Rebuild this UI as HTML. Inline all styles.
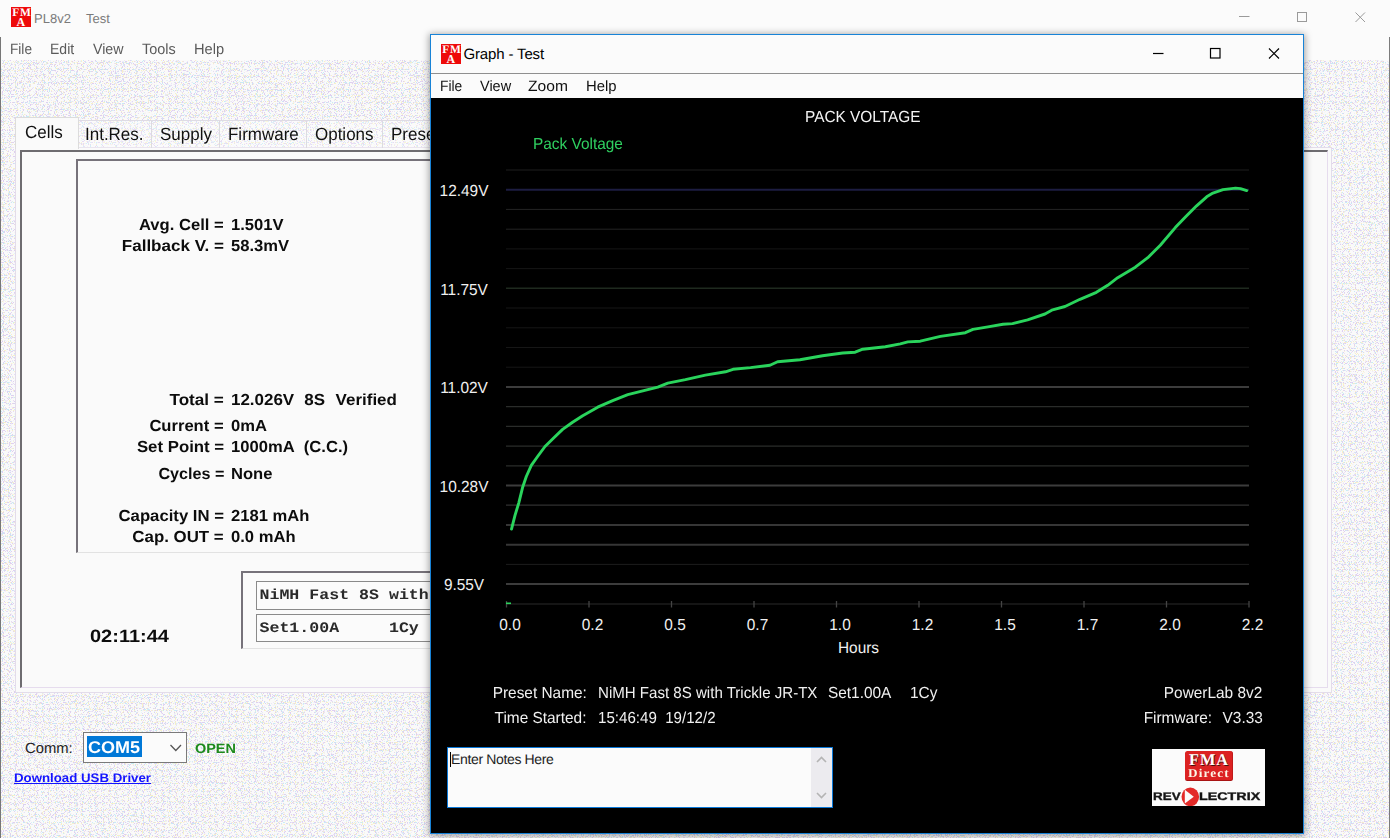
<!DOCTYPE html>
<html><head><meta charset="utf-8"><title>PL8v2 Test</title>
<style>
html,body{margin:0;padding:0}
body{text-rendering:geometricPrecision;width:1390px;height:838px;position:relative;overflow:hidden;background:#f2f1f5;font-family:"Liberation Sans",sans-serif;color:#000}
.a{position:absolute;white-space:nowrap;line-height:1}
.ui{font-size:15px}
.ico{position:absolute;width:20px;height:20px;background:#ee0a0a;overflow:hidden;color:#fff;font-family:"Liberation Serif",serif;font-weight:bold}
.ico b{position:absolute;line-height:1;white-space:nowrap}
.b{font-weight:bold}
.lab{position:absolute;white-space:nowrap;line-height:1;font-weight:bold;font-size:16px;color:#0c0c0c}
.lab.l{transform:scaleX(1.0366);transform-origin:right bottom}
.lab.v{transform:scaleX(1.0366);transform-origin:left bottom}
.gt{position:absolute;white-space:nowrap;line-height:1;font-size:16px;color:#f0f0f0;transform:scaleX(0.9625);transform-origin:left}
.gt.r{transform-origin:right}
.mono{font-family:"Liberation Mono",monospace;font-size:16.6px;font-weight:bold;color:#2a2a2a;transform:scaleY(0.88);transform-origin:left bottom}
</style></head><body>

<!-- ================= MAIN WINDOW ================= -->
<svg class="a" id="noise" style="left:0;top:0" width="1390" height="838">
<defs>
<filter id="nz" x="0" y="0" width="100%" height="100%" color-interpolation-filters="sRGB">
<feTurbulence type="fractalNoise" baseFrequency="0.85" numOctaves="1" seed="7" result="t"/>
<feColorMatrix in="t" type="matrix" values="0 0 0 0 0.87  0 0 0 0 0.81  0 0 0 0 0.94  14 0 0 0 -7.75" result="lav"/>
<feColorMatrix in="t" type="matrix" values="0 0 0 0 0.97  0 0 0 0 0.94  0 0 0 0 0.78  0 14 0 0 -8.55" result="yel"/>
<feColorMatrix in="t" type="matrix" values="0 0 0 0 0.78  0 0 0 0 0.92  0 0 0 0 0.96  0 0 14 0 -8.75" result="cy"/>
<feFlood flood-color="#fafafa" result="base"/>
<feMerge><feMergeNode in="base"/><feMergeNode in="lav"/><feMergeNode in="yel"/><feMergeNode in="cy"/></feMerge>
</filter>
</defs>
<rect x="0" y="0" width="1390" height="838" filter="url(#nz)"/>
</svg>
<div class="a" id="mtitle" style="left:0;top:0;width:1390px;height:37px;background:#fbfbfb"></div>
<div class="a" id="mmenu" style="left:0;top:37px;width:1390px;height:23px;background:#fbfbfb"></div>
<div class="a" style="left:0;top:37px;width:1px;height:801px;background:#777"></div>
<div class="a" style="left:1389px;top:37px;width:1px;height:801px;background:#7c7c7c"></div>
<div class="ico" style="left:11px;top:7px"><b style="left:1.3px;top:0.5px;font-size:11.5px;letter-spacing:0.8px">FM</b><b style="left:5.6px;top:9.3px;font-size:12px">A</b></div>
<div class="a" style="left:34px;top:12px;font-size:13px;color:#7a7a7a">PL8v2</div>
<div class="a" style="left:86px;top:12px;font-size:13px;color:#7a7a7a">Test</div>
<div class="a ui" style="left:10px;top:41.7px;color:#5a5a5a;transform:scaleX(0.91);transform-origin:left">File</div>
<div class="a ui" style="left:50.2px;top:41.7px;color:#5a5a5a;transform:scaleX(0.934);transform-origin:left">Edit</div>
<div class="a ui" style="left:92.6px;top:41.7px;color:#5a5a5a;transform:scaleX(0.947);transform-origin:left">View</div>
<div class="a ui" style="left:141.9px;top:41.7px;color:#5a5a5a;transform:scaleX(0.963);transform-origin:left">Tools</div>
<div class="a ui" style="left:193.8px;top:41.7px;color:#5a5a5a;transform:scaleX(0.977);transform-origin:left">Help</div>
<svg class="a" style="left:1230px;top:5px" width="150" height="26" viewBox="0 0 150 26" fill="none" stroke="#9a9a9a" stroke-width="1">
<path d="M9 11.5H19.5"/><rect x="67.5" y="7.5" width="9" height="9"/><path d="M125.5 7.5L135 17M135 7.5L125.5 17"/></svg>

<!-- tab control -->
<div class="a" id="tabpage" style="left:15px;top:147px;width:1317px;height:546px;background:#fafafa;border:1px solid #e3dcea;box-sizing:border-box"></div>
<div class="a" style="left:20px;top:150px;width:1308px;height:538px;border-left:2px solid #6e6c70;border-top:2px solid #6e6c70;border-right:1px solid #e6dcee;border-bottom:1px solid #e6dcee;box-sizing:border-box"></div>
<div class="a" style="left:79px;top:120px;width:360px;height:28px;background:rgba(255,255,255,0.25);border-top:1px solid #dedbe4"></div>
<div class="a" style="left:151px;top:121px;width:1px;height:27px;background:#dcdbe0"></div>
<div class="a" style="left:219px;top:121px;width:1px;height:27px;background:#dcdbe0"></div>
<div class="a" style="left:306px;top:121px;width:1px;height:27px;background:#dcdbe0"></div>
<div class="a" style="left:382px;top:121px;width:1px;height:27px;background:#dcdbe0"></div>
<div class="a" style="left:15px;top:117px;width:64px;height:32px;background:#fafafa;border:1px solid #dcdcdc;border-bottom:none;box-sizing:border-box"></div>
<div class="a" style="left:24.5px;top:124.2px;font-size:17.7px;color:#111;transform:scaleX(0.96);transform-origin:left">Cells</div>
<div class="a" style="left:84.5px;top:126.3px;font-size:17.7px;color:#111;transform:scaleX(0.96);transform-origin:left">Int.Res.</div>
<div class="a" style="left:159.5px;top:126.3px;font-size:17.7px;color:#111;transform:scaleX(0.96);transform-origin:left">Supply</div>
<div class="a" style="left:228px;top:126.3px;font-size:17.7px;color:#111;transform:scaleX(0.96);transform-origin:left">Firmware</div>
<div class="a" style="left:314.5px;top:126.3px;font-size:17.7px;color:#111;transform:scaleX(0.96);transform-origin:left">Options</div>
<div class="a" style="left:391px;top:126.3px;font-size:17.7px;color:#111;transform:scaleX(0.96);transform-origin:left">Presets</div>

<!-- inner panel -->
<div class="a" style="left:76px;top:159px;width:1200px;height:394px;border-left:2px solid #76727a;border-top:2px solid #76727a;border-bottom:1px solid #e2e2e2;box-sizing:border-box"></div>

<div class="lab l" style="right:1166px;top:217.8px">Avg. Cell =</div><div class="lab v" style="left:231px;top:217.8px">1.501V</div>
<div class="lab l" style="right:1166px;top:238.8px;transform:scaleX(1.065)">Fallback V. =</div><div class="lab v" style="left:231px;top:238.8px">58.3mV</div>
<div class="lab l" style="right:1166px;top:392.8px;transform:scaleX(1.069)">Total =</div><div class="lab v" style="left:231px;top:392.8px;transform:scaleX(1.060)">12.026V<span style="margin-left:9.5px">8S</span><span style="margin-left:10px">Verified</span></div>
<div class="lab l" style="right:1166px;top:418.8px">Current =</div><div class="lab v" style="left:231px;top:418.8px">0mA</div>
<div class="lab l" style="right:1166px;top:439.8px;transform:scaleX(1.049)">Set Point =</div><div class="lab v" style="left:231px;top:439.8px">1000mA&nbsp; (C.C.)</div>
<div class="lab l" style="right:1166px;top:466.8px;transform:scaleX(1.009)">Cycles =</div><div class="lab v" style="left:231px;top:466.8px">None</div>
<div class="lab l" style="right:1166px;top:508.8px;transform:scaleX(1.044)">Capacity IN =</div><div class="lab v" style="left:231px;top:508.8px">2181 mAh</div>
<div class="lab l" style="right:1166px;top:529.8px;transform:scaleX(1.054)">Cap. OUT =</div><div class="lab v" style="left:231px;top:529.8px">0.0 mAh</div>

<!-- preset box -->
<div class="a" style="left:241px;top:571px;width:260px;height:78px;border-left:2px solid #76727a;border-top:2px solid #76727a;border-bottom:1px solid #e2e2e2;box-sizing:border-box"></div>
<div class="a" style="left:256px;top:581px;width:240px;height:29px;border:1px solid #8a8a8a;box-sizing:border-box;background:#fbfbfb"></div>
<div class="a" style="left:256px;top:614px;width:240px;height:28px;border:1px solid #8a8a8a;box-sizing:border-box;background:#fbfbfb"></div>
<div class="a mono" style="left:259.5px;top:586.4px">NiMH Fast 8S with Trickle</div>
<div class="a mono" style="left:259.5px;top:619px">Set1.00A&nbsp;&nbsp;&nbsp;&nbsp;&nbsp;1Cy</div>
<div class="lab v" style="left:90px;top:627.5px;font-size:17.9px;transform:scaleX(1.118)">02:11:44</div>

<!-- comm -->
<div class="a" style="left:25px;top:742.2px;font-size:14.8px;color:#222">Comm:</div>
<div class="a" style="left:83px;top:732px;width:104px;height:31px;border:1px solid #7a7a7a;box-sizing:border-box;background:#fbfbfb"></div>
<div class="a" style="left:87px;top:736px;width:55px;height:21px;background:#0078d7"></div>
<div class="a b" style="left:88px;top:739.3px;font-size:17px;color:#fff;transform:scaleX(1.06);transform-origin:left">COM5</div>
<svg class="a" style="left:168px;top:742px" width="16" height="12" viewBox="0 0 16 12" fill="none" stroke="#555" stroke-width="1.3"><path d="M2.5 3L7.8 8.5L13 3"/></svg>
<div class="a b" style="left:195px;top:742px;font-size:13.5px;color:#1d8a1d;transform:scaleX(1.07);transform-origin:left">OPEN</div>
<div class="a b" style="left:14px;top:771.7px;font-size:12.4px;color:#1414ff;text-decoration:underline;transform:scaleX(1.07);transform-origin:left">Download USB Driver</div>

<!-- ================= GRAPH WINDOW ================= -->
<div class="a" id="gwin" style="left:430px;top:34px;width:874px;height:800px;background:#000;border:1px solid #1883d7;box-sizing:border-box;box-shadow:0 1px 7px 1px rgba(0,0,0,0.36)"></div>
<div class="a" style="left:431px;top:35px;width:872px;height:38px;background:#fbfbfb"></div>
<div class="a" style="left:431px;top:73px;width:872px;height:1px;background:#8f8f8f"></div>
<div class="a" style="left:431px;top:74px;width:872px;height:24px;background:#fbfbfb"></div>
<div class="ico" style="left:441px;top:44px"><b style="left:1.3px;top:0.5px;font-size:11.5px;letter-spacing:0.8px">FM</b><b style="left:5.6px;top:9.3px;font-size:12px">A</b></div>
<div class="a" style="left:463.5px;top:47.3px;font-size:15px;color:#000;letter-spacing:-0.15px">Graph - Test</div>
<div class="a ui" style="left:440px;top:78.9px;color:#111;transform:scaleX(0.92);transform-origin:left">File</div>
<div class="a ui" style="left:479.5px;top:78.9px;color:#111;transform:scaleX(0.965);transform-origin:left">View</div>
<div class="a ui" style="left:528.3px;top:78.9px;color:#111;transform:scaleX(1.04);transform-origin:left">Zoom</div>
<div class="a ui" style="left:586px;top:78.9px;color:#111;transform:scaleX(0.99);transform-origin:left">Help</div>
<svg class="a" style="left:1145px;top:41px" width="150" height="26" viewBox="0 0 150 26" fill="none" stroke="#000" stroke-width="1.2">
<path d="M8 12.5H18.5"/><rect x="65.5" y="7.5" width="9.5" height="9.5"/><path d="M124 7.5L134 17.5M134 7.5L124 17.5"/></svg>

<!-- chart -->
<div class="gt" style="left:805px;top:110px;color:#f4f4f4">PACK VOLTAGE</div>
<div class="gt" style="left:533px;top:136.5px;color:#2fd060">Pack Voltage</div>
<svg class="a" id="chart" style="left:431px;top:98px" width="872" height="560" viewBox="431 98 872 560">
<g id="grid" font-family="Liberation Sans, sans-serif">
<line x1="506" x2="1249" y1="170.0" y2="170.0" stroke="#1e1e1e" stroke-width="1"/>
<line x1="506" x2="1249" y1="189.7" y2="189.7" stroke="#1d1d42" stroke-width="2"/>
<line x1="506" x2="1249" y1="209.4" y2="209.4" stroke="#242424" stroke-width="1"/>
<line x1="506" x2="1249" y1="229.2" y2="229.2" stroke="#242424" stroke-width="1"/>
<line x1="506" x2="1249" y1="248.9" y2="248.9" stroke="#161616" stroke-width="1"/>
<line x1="506" x2="1249" y1="268.6" y2="268.6" stroke="#161616" stroke-width="1"/>
<line x1="506" x2="1249" y1="288.3" y2="288.3" stroke="#1f2a1f" stroke-width="1.5"/>
<line x1="506" x2="1249" y1="308.0" y2="308.0" stroke="#161616" stroke-width="1"/>
<line x1="506" x2="1249" y1="327.8" y2="327.8" stroke="#161616" stroke-width="1"/>
<line x1="506" x2="1249" y1="347.5" y2="347.5" stroke="#161616" stroke-width="1"/>
<line x1="506" x2="1249" y1="367.2" y2="367.2" stroke="#161616" stroke-width="1"/>
<line x1="506" x2="1249" y1="386.9" y2="386.9" stroke="#3c3c3c" stroke-width="2"/>
<line x1="506" x2="1249" y1="406.6" y2="406.6" stroke="#2a2c2a" stroke-width="1.2"/>
<line x1="506" x2="1249" y1="426.4" y2="426.4" stroke="#2a2c2a" stroke-width="1.2"/>
<line x1="506" x2="1249" y1="446.1" y2="446.1" stroke="#2a2c2a" stroke-width="1.2"/>
<line x1="506" x2="1249" y1="465.8" y2="465.8" stroke="#2a2c2a" stroke-width="1.2"/>
<line x1="506" x2="1249" y1="485.5" y2="485.5" stroke="#3c3c3c" stroke-width="2"/>
<line x1="506" x2="1249" y1="505.2" y2="505.2" stroke="#303030" stroke-width="1.3"/>
<line x1="506" x2="1249" y1="525.0" y2="525.0" stroke="#363636" stroke-width="2"/>
<line x1="506" x2="1249" y1="544.7" y2="544.7" stroke="#363636" stroke-width="2"/>
<line x1="506" x2="1249" y1="564.4" y2="564.4" stroke="#1c1c1c" stroke-width="1"/>
<line x1="506" x2="1249" y1="584.1" y2="584.1" stroke="#3c3c3c" stroke-width="2"/>
<line x1="506" x2="1249" y1="604" y2="604" stroke="#2a2a2a" stroke-width="1.2"/>
<line x1="506.5" x2="506.5" y1="601" y2="607.5" stroke="#444" stroke-width="1.3"/>
<line x1="589.0" x2="589.0" y1="601" y2="607.5" stroke="#444" stroke-width="1.3"/>
<line x1="671.5" x2="671.5" y1="601" y2="607.5" stroke="#444" stroke-width="1.3"/>
<line x1="754.0" x2="754.0" y1="601" y2="607.5" stroke="#444" stroke-width="1.3"/>
<line x1="836.5" x2="836.5" y1="601" y2="607.5" stroke="#444" stroke-width="1.3"/>
<line x1="919.0" x2="919.0" y1="601" y2="607.5" stroke="#444" stroke-width="1.3"/>
<line x1="1001.5" x2="1001.5" y1="601" y2="607.5" stroke="#444" stroke-width="1.3"/>
<line x1="1084.0" x2="1084.0" y1="601" y2="607.5" stroke="#444" stroke-width="1.3"/>
<line x1="1166.5" x2="1166.5" y1="601" y2="607.5" stroke="#444" stroke-width="1.3"/>
<line x1="1249.0" x2="1249.0" y1="601" y2="607.5" stroke="#444" stroke-width="1.3"/>
<line x1="506" x2="511" y1="603.3" y2="603.3" stroke="#2bd35c" stroke-width="1.6"/>
<path d="M511.5 529.1 L515.0 515.4 L518.8 502.8 L522.5 487.8 L526.3 476.5 L531.3 465.3 L537.6 456.5 L545.0 446.5 L553.9 437.7 L562.6 429.4 L572.6 422.2 L582.7 415.7 L597.7 407.2 L612.7 400.6 L627.8 394.6 L642.8 390.9 L657.8 387.1 L667.8 383.1 L685.4 379.6 L705.4 375.1 L725.5 371.8 L733.0 369.3 L750.5 367.6 L770.0 365.2 L777.6 361.7 L800.0 359.7 L822.6 355.7 L842.7 353.0 L855.2 352.2 L862.7 349.2 L885.3 346.7 L900.3 343.9 L907.8 341.9 L920.3 341.2 L940.4 336.4 L965.4 332.7 L972.9 329.4 L988.0 326.9 L1003.0 324.3 L1012.5 323.6 L1027.6 319.8 L1045.0 314.0 L1052.6 309.8 L1065.0 306.5 L1080.0 299.3 L1096.4 292.3 L1107.7 285.3 L1117.7 277.7 L1135.3 267.2 L1147.8 257.7 L1160.3 245.2 L1175.3 227.6 L1185.4 217.1 L1196.6 205.8 L1206.7 196.8 L1212.9 193.1 L1223.0 189.6 L1235.5 188.1 L1240.5 188.6 L1246.7 190.6" fill="none" stroke="#2ad45c" stroke-width="2.9" stroke-linejoin="round" stroke-linecap="round"/>
<text transform="translate(464,196.0) scale(0.9625,1)" text-anchor="middle" font-size="16" fill="#f0f0f0">12.49V</text>
<text transform="translate(464,294.6) scale(0.9625,1)" text-anchor="middle" font-size="16" fill="#f0f0f0">11.75V</text>
<text transform="translate(464,393.2) scale(0.9625,1)" text-anchor="middle" font-size="16" fill="#f0f0f0">11.02V</text>
<text transform="translate(464,491.8) scale(0.9625,1)" text-anchor="middle" font-size="16" fill="#f0f0f0">10.28V</text>
<text transform="translate(464,590.4) scale(0.9625,1)" text-anchor="middle" font-size="16" fill="#f0f0f0">9.55V</text>
<text transform="translate(510.0,629.5) scale(0.9625,1)" text-anchor="middle" font-size="16" fill="#f0f0f0">0.0</text>
<text transform="translate(592.5,629.5) scale(0.9625,1)" text-anchor="middle" font-size="16" fill="#f0f0f0">0.2</text>
<text transform="translate(675.0,629.5) scale(0.9625,1)" text-anchor="middle" font-size="16" fill="#f0f0f0">0.5</text>
<text transform="translate(757.5,629.5) scale(0.9625,1)" text-anchor="middle" font-size="16" fill="#f0f0f0">0.7</text>
<text transform="translate(840.0,629.5) scale(0.9625,1)" text-anchor="middle" font-size="16" fill="#f0f0f0">1.0</text>
<text transform="translate(922.5,629.5) scale(0.9625,1)" text-anchor="middle" font-size="16" fill="#f0f0f0">1.2</text>
<text transform="translate(1005.0,629.5) scale(0.9625,1)" text-anchor="middle" font-size="16" fill="#f0f0f0">1.5</text>
<text transform="translate(1087.5,629.5) scale(0.9625,1)" text-anchor="middle" font-size="16" fill="#f0f0f0">1.7</text>
<text transform="translate(1170.0,629.5) scale(0.9625,1)" text-anchor="middle" font-size="16" fill="#f0f0f0">2.0</text>
<text transform="translate(1252.5,629.5) scale(0.9625,1)" text-anchor="middle" font-size="16" fill="#f0f0f0">2.2</text>
<text transform="translate(858.5,653) scale(0.9625,1)" text-anchor="middle" font-size="16" fill="#f0f0f0">Hours</text>
</g>
</svg>

<div class="gt r" style="right:803.5px;top:685.5px">Preset Name:</div>
<div class="gt" style="left:597.5px;top:685.5px;transform:scaleX(0.942)">NiMH Fast 8S with Trickle JR-TX</div>
<div class="gt" style="left:828px;top:685.5px">Set1.00A</div>
<div class="gt" style="left:910px;top:685.5px">1Cy</div>
<div class="gt r" style="right:803.5px;top:710.5px">Time Started:</div>
<div class="gt" style="left:598px;top:710.5px;transform:scaleX(0.944)">15:46:49&nbsp; 19/12/2</div>
<div class="gt r" style="right:127.5px;top:685.5px">PowerLab 8v2</div>
<div class="gt r" style="right:177.5px;top:710.5px">Firmware:</div><div class="gt r" style="right:127.5px;top:710.5px">V3.33</div>

<!-- notes -->
<div class="a" style="left:447px;top:747px;width:386px;height:61px;border:1px solid #0a78d7;box-sizing:border-box;background:#fbfbfb"></div>
<div class="a" style="left:811px;top:748px;width:21px;height:59px;background:#ecebef"></div>
<svg class="a" style="left:811px;top:748px" width="21" height="59" viewBox="0 0 21 59" fill="none" stroke="#b4b4b4" stroke-width="1.6"><path d="M6 14L10.5 9.5L15 14"/><path d="M6 45L10.5 49.5L15 45"/></svg>
<div class="a" style="left:450px;top:752px;width:1px;height:15px;background:#000"></div>
<div class="a" style="left:451px;top:752px;font-size:14px;color:#222;letter-spacing:-0.35px">Enter Notes Here</div>

<!-- logo -->
<div class="a" id="logo" style="left:1152px;top:749px;width:113px;height:57px;background:#fbfbfb;overflow:hidden">
 <div class="a" style="left:32.5px;top:1.5px;width:48px;height:30px;background:#dc2222;border-radius:2.5px;border-bottom:1px solid #a81414;border-right:1px solid #c01a1a;box-sizing:border-box"></div>
 <div class="a" id="fma" style="left:37px;top:2.9px;font-family:'Liberation Serif',serif;font-weight:bold;font-size:16.3px;color:#fff;letter-spacing:1px;text-shadow:0.8px 0.8px 0 #411">FMA</div>
 <div class="a" id="direct" style="left:36.2px;top:17.6px;font-family:'Liberation Serif',serif;font-weight:bold;font-size:12px;color:#fdf6e6;letter-spacing:1.05px;transform:scaleX(1.1);transform-origin:left">Direct</div>
 <div class="a b" id="rev" style="left:0.5px;top:43.3px;font-size:11px;color:#151515;-webkit-text-stroke:0.35px #151515;transform:scaleX(1.22);transform-origin:left">REV</div>
 <svg class="a" style="left:29px;top:37.5px" width="19" height="20" viewBox="0 0 19 20"><ellipse cx="9.3" cy="9.8" rx="8.8" ry="9.4" fill="#e32a28"/><path d="M3.8 2.8L12.8 9.8L3.8 16.6Z" fill="#fbfbfb"/></svg>
 <div class="a b" id="lectrix" style="left:47.3px;top:43.3px;font-size:11px;color:#151515;-webkit-text-stroke:0.35px #151515;transform:scaleX(1.3);transform-origin:left">LECTRIX</div>
</div>

</body></html>
